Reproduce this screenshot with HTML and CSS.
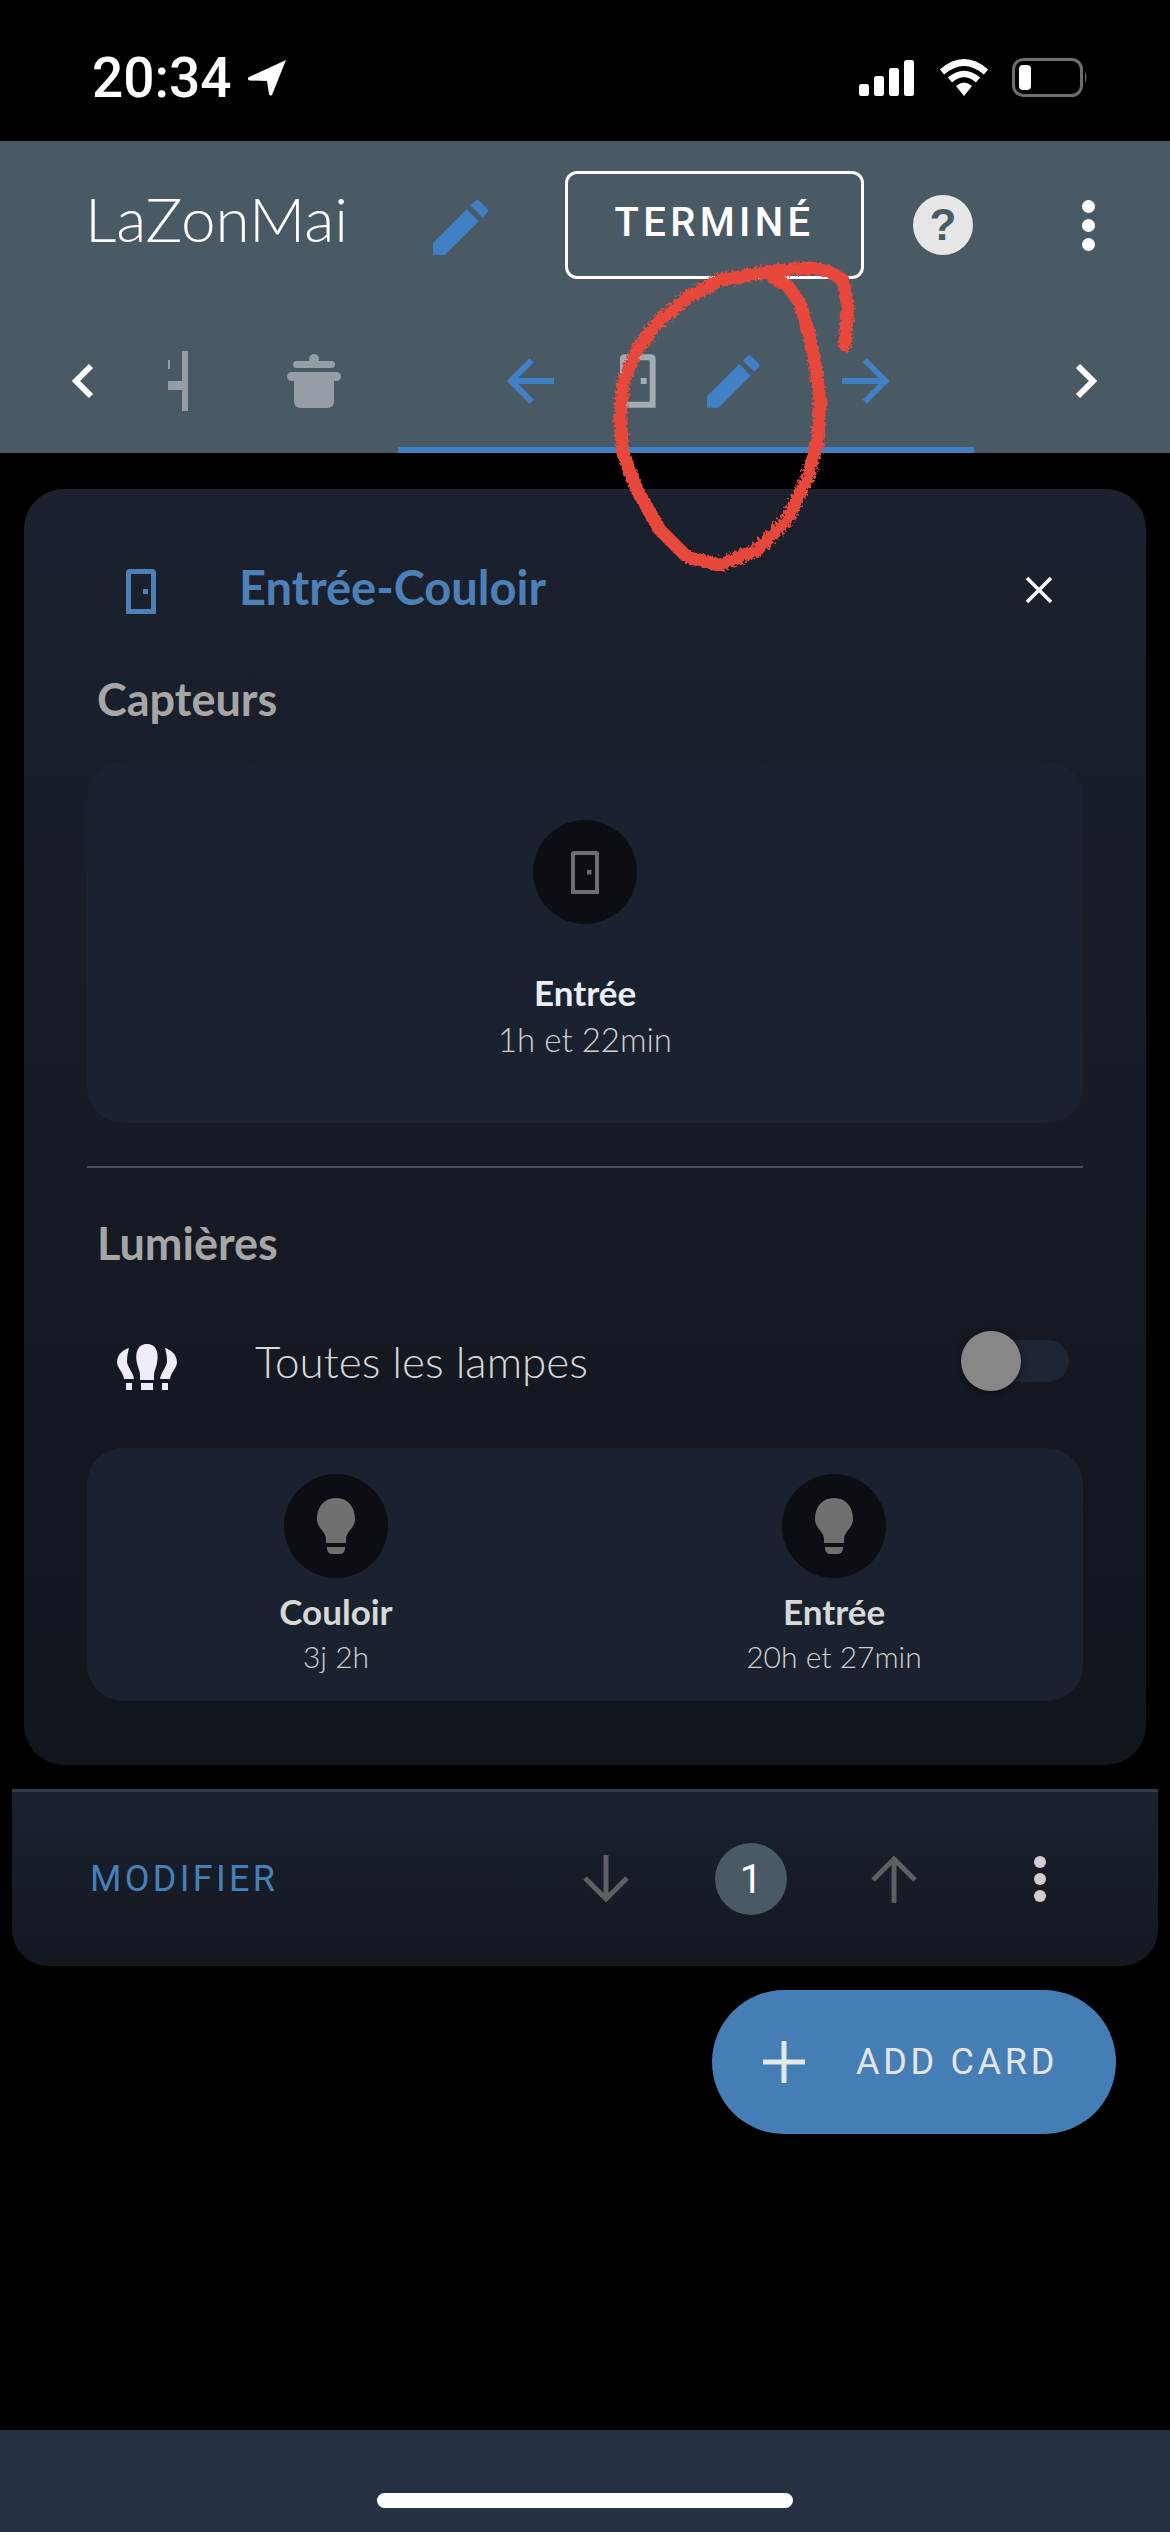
FILE: index.html
```html
<!DOCTYPE html>
<html lang="fr">
<head>
    <meta charset="UTF-8">
    <meta name="viewport" content="width=device-width, initial-scale=1.0">
    <title>LaZonMai</title>
    <link rel="stylesheet" href="styles.css">
</head>
<body>

    <div class="statusbar">
        <span class="time">20:34</span>
        <svg class="loc" width="39" height="36" viewBox="0 0 39 36"><path d="M38 0 L0 17.5 Q-1 20 2 20.5 L19 21 L21 34 Q22 36.5 24 35 Z" fill="#fff"/></svg>
        <svg class="signal" width="56" height="36" viewBox="0 0 56 36"><rect x="0" y="24" width="10" height="12" rx="2.5" fill="#fff"/><rect x="15" y="16" width="10" height="20" rx="2.5" fill="#fff"/><rect x="30" y="8" width="10" height="28" rx="2.5" fill="#fff"/><rect x="45" y="0" width="10" height="36" rx="2.5" fill="#fff"/></svg>
        <svg class="wifi" width="50" height="38" viewBox="0 0 50 38"><path d="M3 13 Q25 -6 47 13" fill="none" stroke="#fff" stroke-width="6.5"/><path d="M11 21 Q25 9 39 21" fill="none" stroke="#fff" stroke-width="6.5"/><path d="M17 27 Q25 20 33 27 L25 37 Z" fill="#fff"/></svg>
        <svg class="battery" width="76" height="40" viewBox="0 0 76 40"><rect x="1.5" y="1.5" width="68" height="36" rx="10" fill="none" stroke="#6e6e6e" stroke-width="3"/><rect x="7" y="7" width="12" height="25" rx="4" fill="#fff"/><path d="M73 14 Q76 19 73 25 Z" fill="#6e6e6e"/></svg>
    </div>

    <div class="header">
        <div class="toolbar">
            <span class="app-title">LaZonMai</span>
            <svg class="title-edit" width="56" height="56" viewBox="0 0 24 24"><path d="M0 24V18.9L14.5 4.4L19.6 9.5L5.1 24Z M16.1 2.8L18.1 0.8Q19 0 19.9 0.8L23.2 4.1Q24 5 23.2 5.9L21.2 7.9Z" fill="#4180c4"/></svg>
            <button class="done">TERMINÉ</button>
            <svg class="help" width="60" height="60" viewBox="0 0 60 60"><circle cx="30" cy="30" r="30" fill="#e6e6e6"/><text x="30" y="45" text-anchor="middle" class="help-mark">?</text></svg>
            <span class="dots"><i></i><i></i><i></i></span>
        </div>
        <div class="tabs">
            <svg width="22" height="36" viewBox="0 0 22 36"><path d="M19 3 L4 18 L19 33" fill="none" stroke="#fff" stroke-width="6"/></svg>
            <svg class="cut-icon" width="20" height="60" viewBox="0 0 20 60"><path d="M14 0h6v60h-6z M0 30h14v9H0z M0 9h2v9H0z" fill="#959da5"/></svg>
            <svg class="trash" width="54" height="54" viewBox="0 0 54 54"><circle cx="27" cy="5" r="5" fill="#959da5"/><rect x="6" y="7" width="42" height="7" rx="3.5" fill="#959da5"/><rect x="0" y="18" width="54" height="9" rx="4.5" fill="#959da5"/><path d="M7 22H47V47Q47 54 40 54H14Q7 54 7 47Z" fill="#959da5"/></svg>
            <div class="tab-active">
                <svg width="48" height="48" viewBox="0 0 48 48"><path d="M48 24H4 M25 3 L4 24 L25 45" fill="none" stroke="#4180c4" stroke-width="6"/></svg>
                <svg class="door" width="36" height="54" viewBox="0 0 36 54"><path d="M3 54V5Q3 3 5 3H31Q33 3 33 5V51H3" fill="none" stroke="#a4acb3" stroke-width="6"/><rect x="21" y="24" width="6" height="6" fill="#a4acb3"/></svg>
                <svg class="pencil" width="54" height="54" viewBox="0 0 24 24"><path d="M0 24V18.9L14.5 4.4L19.6 9.5L5.1 24Z M16.1 2.8L18.1 0.8Q19 0 19.9 0.8L23.2 4.1Q24 5 23.2 5.9L21.2 7.9Z" fill="#4180c4"/></svg>
                <svg class="arrow-right" width="48" height="48" viewBox="0 0 48 48"><path d="M0 24H44 M23 3 L44 24 L23 45" fill="none" stroke="#4180c4" stroke-width="6"/></svg>
            </div>
            <svg class="chev-right" width="22" height="36" viewBox="0 0 22 36"><path d="M3 3 L18 18 L3 33" fill="none" stroke="#fff" stroke-width="6"/></svg>
        </div>
    </div>

    <div class="card">
        <div class="card-head">
            <svg class="head-door" width="30" height="45" viewBox="0 0 30 45"><path d="M2.5 45V4Q2.5 2.5 4 2.5H26Q27.5 2.5 27.5 4V42.5H2.5" fill="none" stroke="#4e80b8" stroke-width="5"/><rect x="17" y="20" width="5" height="5" fill="#4e80b8"/></svg>
            <h2 class="card-title">Entrée-Couloir</h2>
            <svg class="close" width="28" height="28" viewBox="0 0 28 28"><path d="M2 2L26 26M26 2L2 26" stroke="#fff" stroke-width="3.5"/></svg>
        </div>

        <h3 class="section first">Capteurs</h3>
        <div class="panel panel-sensor">
            <div class="entity">
                <span class="round">
                    <svg width="28" height="43" viewBox="0 0 28 43"><path d="M2 43V3Q2 2 3 2H25Q26 2 26 3V41H2" fill="none" stroke="#6f6f6f" stroke-width="4"/><rect x="16" y="19" width="4.5" height="4.5" fill="#6f6f6f"/></svg>
                </span>
                <span class="entity-name bright">Entrée</span>
                <span class="entity-time">1h et 22min</span>
            </div>
        </div>

        <div class="divider"></div>

        <h3 class="section">Lumières</h3>
        <div class="lamp-row">
            <svg class="lamps" width="60" height="46" viewBox="0 0 60 46"><path d="M30 0C40 0 42 10 40 19C39 24 37 27 37 31V36H23V31C23 27 21 24 20 19C18 10 20 0 30 0Z M24 39H36V46H24Z" fill="#ecedf6"/><path d="M12 4C6 6 0 10 0 19C1 25 6 28 7 35H17C16 28 11 24 10 18C10 12 11 8 12 4Z M9 39H15V46H9Z M48 4C54 6 60 10 60 19C59 25 54 28 53 35H43C44 28 49 24 50 18C50 12 49 8 48 4Z M45 39H51V46H45Z" fill="#ecedf6"/></svg>
            <span class="lamp-label">Toutes les lampes</span>
            <span class="switch"><span class="knob"></span></span>
        </div>
        <div class="panel panel-lights">
            <div class="entity">
                <span class="round">
                    <svg width="40" height="56" viewBox="0 0 40 56"><path d="M20 0C32 0 39 9 39 21C39 30 30 34 30 41V45H10V41C10 34 1 30 1 21C1 9 8 0 20 0Z" fill="#707070"/><path d="M11 49H29V51Q28 56 24 56H16Q12 56 11 51Z" fill="#707070"/></svg>
                </span>
                <span class="entity-name">Couloir</span>
                <span class="entity-time">3j 2h</span>
            </div>
            <div class="entity">
                <span class="round">
                    <svg width="40" height="56" viewBox="0 0 40 56"><path d="M20 0C32 0 39 9 39 21C39 30 30 34 30 41V45H10V41C10 34 1 30 1 21C1 9 8 0 20 0Z" fill="#707070"/><path d="M11 49H29V51Q28 56 24 56H16Q12 56 11 51Z" fill="#707070"/></svg>
                </span>
                <span class="entity-name">Entrée</span>
                <span class="entity-time">20h et 27min</span>
            </div>
        </div>
    </div>

    <div class="actions">
        <span class="modify">MODIFIER</span>
        <svg width="48" height="48" viewBox="0 0 48 48"><path d="M24 0V44 M3 23 L24 44 L45 23" fill="none" stroke="#5d5f62" stroke-width="5"/></svg>
        <span class="position">1</span>
        <svg width="48" height="48" viewBox="0 0 48 48"><path d="M24 48V4 M3 25 L24 4 L45 25" fill="none" stroke="#5d5f62" stroke-width="5"/></svg>
        <span class="dots dots-grey"><i></i><i></i><i></i></span>
    </div>

    <div class="fab-row">
        <button class="fab">
            <svg width="42" height="42" viewBox="0 0 42 42"><path d="M21 0V42M0 21H42" stroke="#e6e6e6" stroke-width="5"/></svg>
            <span>ADD CARD</span>
        </button>
    </div>

    <div class="homebar"><span class="home-line"></span></div>

    <!-- trait rouge dessine a la main par dessus la capture -->
    <svg class="scribble" width="1170" height="600" viewBox="0 0 1170 600">
        <defs>
            <filter id="rough" filterUnits="userSpaceOnUse" x="580" y="240" width="300" height="350">
                <feTurbulence type="fractalNoise" baseFrequency="0.35" numOctaves="2" seed="4"/>
                <feDisplacementMap in="SourceGraphic" scale="8"/>
            </filter>
        </defs>
        <polyline points="845,345 848,307 843,280 830,272 813,268 790,269 767,272 720,280 687,298 657,323 637,350 623,383 620,417 623,453 637,490 660,530 687,557 720,565 757,550 787,520 808,477 818,440 820,400 815,363 808,330 800,303 787,285 773,278" fill="none" stroke="#e8473a" stroke-width="13" stroke-linecap="round" stroke-linejoin="round" filter="url(#rough)"/>
    </svg>

</body>
</html>
```
FILE: styles.css
```css
* {
    box-sizing: border-box;
}
body {
    margin: 0;
    width: 1170px;
    height: 2532px;
    background-color: #000;
    font-family: Lato, sans-serif;
    color: #fff;
    display: flex;
    flex-direction: column;
    position: relative;
    overflow: hidden;
}
.statusbar {
    height: 141px;
    flex: none;
    display: flex;
    align-items: center;
    padding: 15px 82px 0 92px;
}
.time {
    font-family: Roboto, sans-serif;
    font-weight: 500;
    font-size: 55px;
}
.loc {
    margin-left: 16px;
}
.signal {
    margin-left: auto;
}
.wifi {
    margin-left: 24px;
}
.battery {
    margin-left: 23px;
}
.header {
    height: 312px;
    flex: none;
    background-color: #4a5a65;
}
.toolbar {
    height: 168px;
    display: flex;
    align-items: center;
    padding: 0 75px 0 85px;
}
.app-title {
    font-weight: 300;
    font-size: 62px;
    width: 348px;
    position: relative;
    top: -7px;
}
.title-edit {
    flex: none;
    margin-top: 4px;
}
.done {
    width: 299px;
    height: 108px;
    margin-left: 76px;
    border: 3px solid #fff;
    border-radius: 12px;
    background: none;
    color: #fff;
    font-family: Roboto, sans-serif;
    font-weight: 500;
    font-size: 40px;
    letter-spacing: 4.4px;
    padding: 0 0 6px;
}
.help {
    margin-left: 49px;
}
.help-mark {
    font-family: "Liberation Sans", sans-serif;
    font-weight: 700;
    font-size: 44px;
    fill: #4a5a65;
}
.dots {
    margin-left: auto;
    display: flex;
    flex-direction: column;
    gap: 6px;
}
.dots i {
    width: 13px;
    height: 13px;
    border-radius: 50%;
    background-color: #fff;
}
.dots-grey {
    margin-left: 116px;
    gap: 5px;
}
.dots-grey i {
    width: 12px;
    height: 12px;
    background-color: #d0d0d0;
}
.tabs {
    height: 144px;
    display: flex;
    align-items: center;
    padding-left: 72px;
}
.cut-icon {
    margin-left: 74px;
}
.trash {
    margin-left: 99px;
}
.tab-active {
    width: 576px;
    height: 144px;
    margin-left: 57px;
    padding: 6px 85px 0 109px;
    border-bottom: 6px solid #4180c4;
    display: flex;
    align-items: center;
}
.door {
    margin-left: 66px;
}
.pencil {
    margin-left: 51px;
}
.arrow-right {
    margin-left: 81px;
}
.chev-right {
    margin-left: 101px;
}
.card {
    margin: 36px 24px 0;
    height: 1276px;
    flex: none;
    border-radius: 40px;
    background: linear-gradient(#1b212e, #11151c);
    padding: 0 63px;
}
.card-head {
    height: 124px;
    padding-top: 80px;
    display: flex;
    align-items: flex-start;
    margin-left: 39px;
}
.card-title {
    margin: -10px 0 0 83px;
    font-size: 47px;
    font-weight: 700;
    color: #4e80b8;
}
.close {
    margin: 7px 30px 0 auto;
}
.section {
    margin: 0 0 0 10px;
    font-size: 45px;
    font-weight: 700;
    color: #a6a6a6;
    line-height: 48px;
}
.first {
    margin-top: 62px;
}
.panel {
    background-color: #1b222f;
    border-radius: 36px;
    display: flex;
}
.panel-sensor {
    height: 362px;
    margin-top: 38px;
    justify-content: center;
    padding-top: 59px;
}
.panel-lights {
    height: 253px;
    padding-top: 26px;
}
.panel-lights .entity {
    width: 498px;
}
.entity {
    display: flex;
    flex-direction: column;
    align-items: center;
}
.round {
    width: 104px;
    height: 104px;
    border-radius: 50%;
    background-color: #0b0f13;
    display: flex;
    align-items: center;
    justify-content: center;
}
.entity-name {
    margin-top: 48px;
    font-size: 35px;
    font-weight: 700;
    color: #d8d8d8;
    line-height: 40px;
}
.panel-lights .entity-name {
    margin-top: 13px;
}
.bright {
    color: #eceef6;
}
.entity-time {
    margin-top: 8px;
    font-size: 33px;
    font-weight: 300;
    color: #d0d0d0;
    line-height: 38px;
}
.panel-lights .entity-time {
    margin-top: 6px;
    font-size: 30px;
}
.divider {
    height: 2px;
    margin-top: 43px;
    background-color: #4a4f58;
}
.divider + .section {
    margin-top: 51px;
}
.lamp-row {
    height: 181px;
    padding: 6px 14px 0 30px;
    display: flex;
    align-items: center;
}
.lamps {
    flex: none;
    margin-top: 12px;
}
.lamp-label {
    margin-left: 78px;
    font-size: 44px;
    font-weight: 300;
    color: #d8d8d8;
}
.switch {
    margin-left: auto;
    width: 84px;
    height: 42px;
    border-radius: 21px;
    background-color: #1c2733;
    display: flex;
    align-items: center;
}
.knob {
    width: 60px;
    height: 60px;
    border-radius: 50%;
    background-color: #878787;
    box-shadow: 0 2px 6px rgba(0, 0, 0, 0.5);
    margin-left: -24px;
}
.actions {
    margin: 24px 12px 0;
    height: 177px;
    flex: none;
    border-top: 3px solid #2e3c4c;
    border-radius: 0 0 36px 36px;
    background: linear-gradient(#1b2230, #13171f);
    display: flex;
    align-items: center;
    padding: 0 0 0 78px;
}
.modify {
    width: 492px;
    font-family: Roboto, sans-serif;
    font-weight: 400;
    font-size: 36px;
    letter-spacing: 3.3px;
    color: #4680b8;
}
.position {
    width: 72px;
    height: 72px;
    margin: 0 83px 0 85px;
    border-radius: 50%;
    background-color: #4a5a65;
    font-family: Roboto, sans-serif;
    font-size: 40px;
    display: flex;
    align-items: center;
    justify-content: center;
}
.fab-row {
    margin-top: 24px;
    padding-right: 54px;
    display: flex;
    justify-content: flex-end;
}
.fab {
    width: 404px;
    height: 144px;
    border: none;
    border-radius: 72px;
    background-color: #457eb4;
    color: #e4e4e4;
    font-family: Roboto, sans-serif;
    font-weight: 400;
    font-size: 36px;
    letter-spacing: 3.7px;
    display: flex;
    align-items: center;
    padding: 0 0 0 51px;
}
.fab span {
    margin-left: 51px;
}
.homebar {
    margin-top: auto;
    height: 102px;
    background-color: #263243;
    display: flex;
    justify-content: center;
    padding-top: 63px;
}
.home-line {
    width: 416px;
    height: 15px;
    border-radius: 8px;
    background-color: #fff;
}
.scribble {
    position: absolute;
    left: 0;
    top: 0;
}
```
